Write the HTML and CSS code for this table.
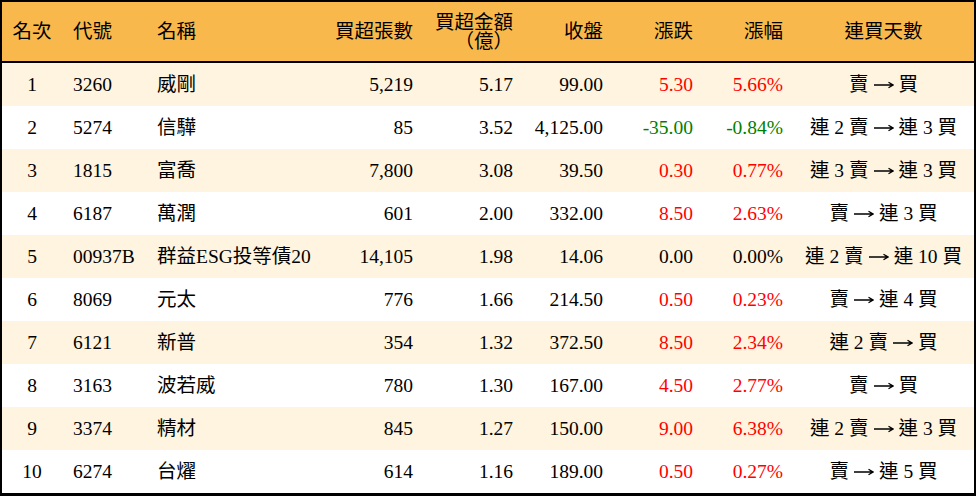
FILE: index.html
```html
<!DOCTYPE html>
<html lang="zh-Hant">
<head>
<meta charset="utf-8">
<title>買超排行</title>
<link rel="stylesheet" href="styles.css">
</head>
<body>
<div class="board">
  <div class="row head">
    <div class="c center">名次</div>
    <div class="c left">代號</div>
    <div class="c left">名稱</div>
    <div class="c right">買超張數</div>
    <div class="c right two">買超金額<br>（億）</div>
    <div class="c right">收盤</div>
    <div class="c right">漲跌</div>
    <div class="c right">漲幅</div>
    <div class="c center">連買天數</div>
  </div>
  <div class="row odd">
    <div class="c center">1</div><div class="c left">3260</div><div class="c left">威剛</div>
    <div class="c right">5,219</div><div class="c right">5.17</div><div class="c right">99.00</div>
    <div class="c right up">5.30</div><div class="c right up">5.66%</div><div class="c center">賣<svg class="arr" viewBox="0 0 20 10"><path d="M0 5H18.5M14.5 2.2L19 5L14.5 7.8"/></svg>買</div>
  </div>
  <div class="row">
    <div class="c center">2</div><div class="c left">5274</div><div class="c left">信驊</div>
    <div class="c right">85</div><div class="c right">3.52</div><div class="c right">4,125.00</div>
    <div class="c right down">-35.00</div><div class="c right down">-0.84%</div><div class="c center">連 2 賣<svg class="arr" viewBox="0 0 20 10"><path d="M0 5H18.5M14.5 2.2L19 5L14.5 7.8"/></svg>連 3 買</div>
  </div>
  <div class="row odd">
    <div class="c center">3</div><div class="c left">1815</div><div class="c left">富喬</div>
    <div class="c right">7,800</div><div class="c right">3.08</div><div class="c right">39.50</div>
    <div class="c right up">0.30</div><div class="c right up">0.77%</div><div class="c center">連 3 賣<svg class="arr" viewBox="0 0 20 10"><path d="M0 5H18.5M14.5 2.2L19 5L14.5 7.8"/></svg>連 3 買</div>
  </div>
  <div class="row">
    <div class="c center">4</div><div class="c left">6187</div><div class="c left">萬潤</div>
    <div class="c right">601</div><div class="c right">2.00</div><div class="c right">332.00</div>
    <div class="c right up">8.50</div><div class="c right up">2.63%</div><div class="c center">賣<svg class="arr" viewBox="0 0 20 10"><path d="M0 5H18.5M14.5 2.2L19 5L14.5 7.8"/></svg>連 3 買</div>
  </div>
  <div class="row odd">
    <div class="c center">5</div><div class="c left">00937B</div><div class="c left">群益ESG投等債20</div>
    <div class="c right">14,105</div><div class="c right">1.98</div><div class="c right">14.06</div>
    <div class="c right">0.00</div><div class="c right">0.00%</div><div class="c center">連 2 賣<svg class="arr" viewBox="0 0 20 10"><path d="M0 5H18.5M14.5 2.2L19 5L14.5 7.8"/></svg>連 10 買</div>
  </div>
  <div class="row">
    <div class="c center">6</div><div class="c left">8069</div><div class="c left">元太</div>
    <div class="c right">776</div><div class="c right">1.66</div><div class="c right">214.50</div>
    <div class="c right up">0.50</div><div class="c right up">0.23%</div><div class="c center">賣<svg class="arr" viewBox="0 0 20 10"><path d="M0 5H18.5M14.5 2.2L19 5L14.5 7.8"/></svg>連 4 買</div>
  </div>
  <div class="row odd">
    <div class="c center">7</div><div class="c left">6121</div><div class="c left">新普</div>
    <div class="c right">354</div><div class="c right">1.32</div><div class="c right">372.50</div>
    <div class="c right up">8.50</div><div class="c right up">2.34%</div><div class="c center">連 2 賣<svg class="arr" viewBox="0 0 20 10"><path d="M0 5H18.5M14.5 2.2L19 5L14.5 7.8"/></svg>買</div>
  </div>
  <div class="row">
    <div class="c center">8</div><div class="c left">3163</div><div class="c left">波若威</div>
    <div class="c right">780</div><div class="c right">1.30</div><div class="c right">167.00</div>
    <div class="c right up">4.50</div><div class="c right up">2.77%</div><div class="c center">賣<svg class="arr" viewBox="0 0 20 10"><path d="M0 5H18.5M14.5 2.2L19 5L14.5 7.8"/></svg>買</div>
  </div>
  <div class="row odd">
    <div class="c center">9</div><div class="c left">3374</div><div class="c left">精材</div>
    <div class="c right">845</div><div class="c right">1.27</div><div class="c right">150.00</div>
    <div class="c right up">9.00</div><div class="c right up">6.38%</div><div class="c center">連 2 賣<svg class="arr" viewBox="0 0 20 10"><path d="M0 5H18.5M14.5 2.2L19 5L14.5 7.8"/></svg>連 3 買</div>
  </div>
  <div class="row">
    <div class="c center">10</div><div class="c left">6274</div><div class="c left">台燿</div>
    <div class="c right">614</div><div class="c right">1.16</div><div class="c right">189.00</div>
    <div class="c right up">0.50</div><div class="c right up">0.27%</div><div class="c center">賣<svg class="arr" viewBox="0 0 20 10"><path d="M0 5H18.5M14.5 2.2L19 5L14.5 7.8"/></svg>連 5 買</div>
  </div>
</div>
</body>
</html>
```
FILE: styles.css
```css
html, body {
  margin: 0;
  padding: 0;
  background: #ffffff;
}

.board {
  width: 976px;
  height: 496px;
  box-sizing: border-box;
  border: 2px solid #000;
  border-bottom-width: 3px;
  font-family: "Liberation Serif", "Noto Sans CJK TC", serif;
  font-size: 19.5px;
  color: #000;
  display: flex;
  flex-direction: column;
}

.row {
  display: grid;
  grid-template-columns: 60px 84px 174px 103px 100px 90px 90px 90px 181px;
  height: 43px;
  background: #ffffff;
}

.row.odd {
  background: #fef4df;
}

.row.head {
  height: 59px;
  background: #f9b84b;
  border-bottom: 2px solid #000;
}

.c {
  display: flex;
  align-items: center;
  line-height: 1;
  white-space: pre;
}

.c.left {
  justify-content: flex-start;
  padding-left: 11px;
}

.c.right {
  justify-content: flex-end;
  text-align: right;
  padding-right: 10px;
}

.c.center {
  justify-content: center;
  text-align: center;
}

.c.two {
  flex-direction: column;
  justify-content: center;
  align-items: flex-end;
  line-height: 19px;
  white-space: nowrap;
}

.arr {
  width: 20px;
  height: 10px;
  margin: 1px 5px 0;
  fill: none;
  stroke: #000;
  stroke-width: 1.3;
}

.up {
  color: #ff0000;
}

.down {
  color: #008000;
}
```
